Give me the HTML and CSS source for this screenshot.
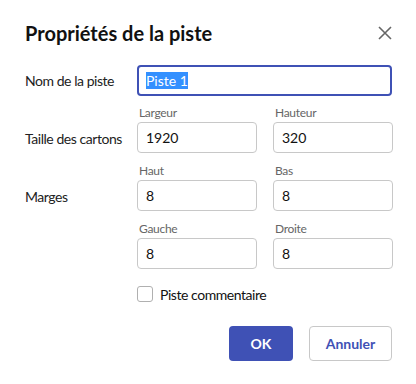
FILE: index.html
```html
<!DOCTYPE html>
<html lang="fr">
<head>
<meta charset="utf-8">
<link rel="stylesheet" href="styles.css">
</head>
<body>
<div class="dialog">
  <div class="header">
    <h1 class="title">Propriétés de la piste</h1>
    <button class="close" aria-label="Fermer">
      <svg width="14" height="14" viewBox="0 0 14 14"><path d="M1 1L13 13M13 1L1 13" stroke="#666" stroke-width="1.6" fill="none"/></svg>
    </button>
  </div>

  <div class="row row-name">
    <div class="label">Nom de la piste</div>
    <div class="field focused"><span class="sel">Piste 1</span></div>
  </div>

  <div class="row">
    <div class="label label-sub">Taille des cartons</div>
    <div class="pair">
      <div class="cell"><div class="sub">Largeur</div><div class="field">1920</div></div>
      <div class="cell"><div class="sub">Hauteur</div><div class="field">320</div></div>
    </div>
  </div>

  <div class="row">
    <div class="label label-sub">Marges</div>
    <div class="pair">
      <div class="cell"><div class="sub">Haut</div><div class="field">8</div></div>
      <div class="cell"><div class="sub">Bas</div><div class="field">8</div></div>
    </div>
  </div>

  <div class="row">
    <div class="label"></div>
    <div class="pair">
      <div class="cell"><div class="sub">Gauche</div><div class="field">8</div></div>
      <div class="cell"><div class="sub">Droite</div><div class="field">8</div></div>
    </div>
  </div>

  <div class="row row-check">
    <div class="label"></div>
    <label class="check"><span class="box"></span><span>Piste commentaire</span></label>
  </div>

  <div class="actions">
    <button class="btn btn-primary">OK</button>
    <button class="btn btn-secondary">Annuler</button>
  </div>
</div>
</body>
</html>
```

FILE: styles.css
```css
html, body {
  margin: 0;
  padding: 0;
  background: #fff;
}
body {
  font-family: "Lato", "Noto Sans", sans-serif;
  color: #222;
  font-size: 14px;
}
.dialog {
  width: 416px;
  height: 384px;
  box-sizing: border-box;
  padding: 21px 24px 0 25px;
}
.header {
  display: flex;
  align-items: center;
  justify-content: space-between;
  height: 24px;
}
.title {
  margin: 0;
  font-size: 20px;
  font-weight: 700;
  color: #111;
  line-height: 24px;
}
.close {
  border: 0;
  background: none;
  padding: 0;
  width: 14px;
  height: 14px;
  margin-right: 0;
  display: flex;
}
.row {
  display: grid;
  grid-template-columns: 112px 255px;
  margin-top: 9px;
}
.row-name {
  margin-top: 20px;
}
.label {
  line-height: 31px;
  font-size: 14px;
  letter-spacing: -0.45px;
  color: #222;
  white-space: nowrap;
}
.label-sub {
  padding-top: 18px;
}
.pair {
  display: grid;
  grid-template-columns: 120px 120px;
  column-gap: 16px;
}
.sub {
  font-size: 12px;
  line-height: 16px;
  letter-spacing: -0.3px;
  color: #666;
  padding-left: 2px;
  margin-bottom: 1px;
}
.field {
  box-sizing: border-box;
  height: 31px;
  border: 1px solid #c8c8c8;
  border-radius: 4px;
  padding: 0 8px;
  line-height: 29px;
  font-size: 14px;
  color: #111;
}
.field.focused {
  border: 2px solid #3f51b5;
  line-height: 27px;
  padding: 0 7px;
}
.sel {
  background: #3390ff;
  color: #fff;
}
.row-check {
  margin-top: 17px;
}
.check {
  display: flex;
  align-items: center;
  gap: 7px;
  height: 16px;
  font-size: 14px;
  letter-spacing: -0.45px;
  color: #111;
}
.box {
  width: 16px;
  height: 16px;
  box-sizing: border-box;
  border: 1px solid #b0b0b0;
  border-radius: 3px;
}
.actions {
  display: flex;
  justify-content: flex-end;
  gap: 16px;
  margin-top: 24px;
}
.btn {
  font-family: inherit;
  height: 35px;
  border-radius: 4px;
  font-size: 14px;
  font-weight: 700;
  cursor: pointer;
}
.btn-primary {
  width: 64px;
  background: #3f51b5;
  border: 0;
  color: #fff;
}
.btn-secondary {
  width: 83px;
  background: #fff;
  border: 1px solid #c8c8c8;
  color: #3f51b5;
}
```
